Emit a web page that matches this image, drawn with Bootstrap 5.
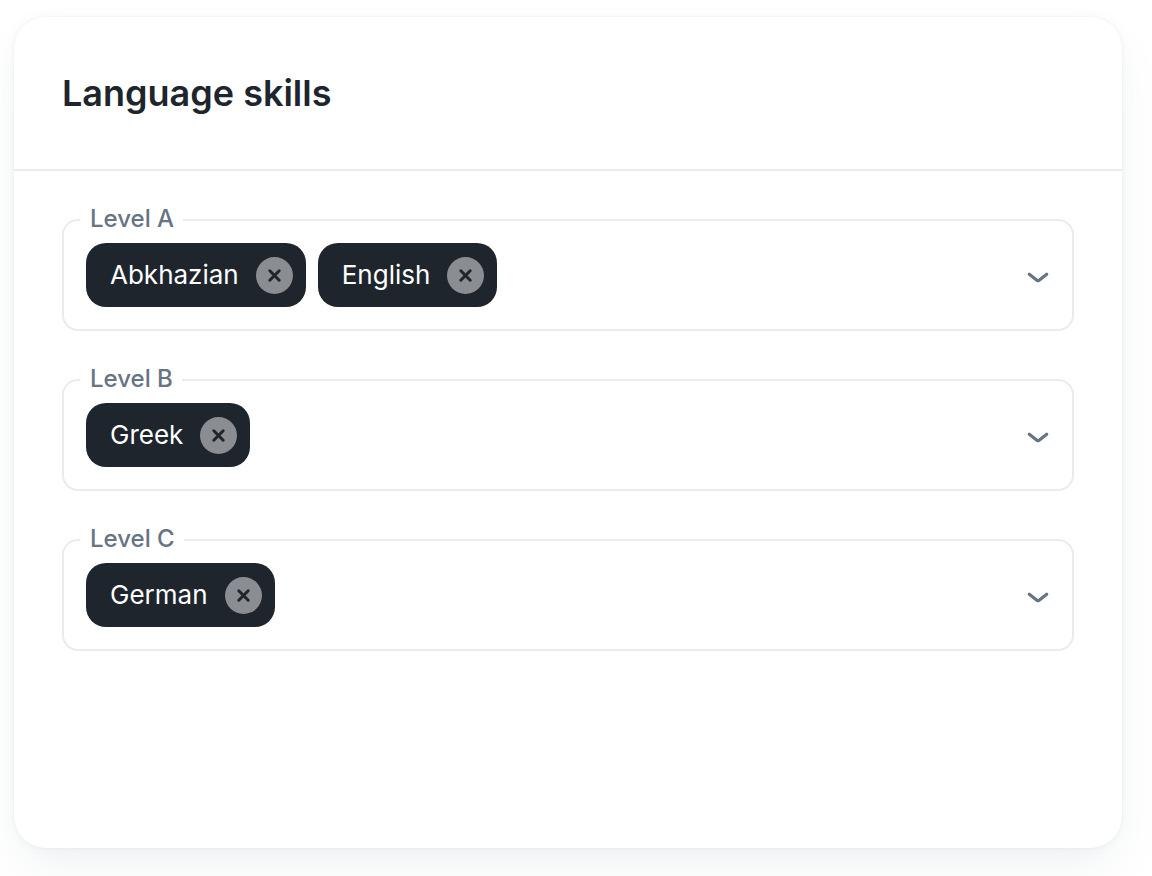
<!DOCTYPE html>
<html lang="en">
<head>
<meta charset="utf-8">
<meta name="viewport" content="width=device-width, initial-scale=1">
<title>Language skills</title>
<link href="https://cdn.jsdelivr.net/npm/bootstrap@5.3.0/dist/css/bootstrap.min.css" rel="stylesheet">
<style>
body { font-family: Inter, sans-serif; background: #fff; color: #1e252d; }
.page-wrap { padding: 17px 30px 28px 14px; }
.skills-card { border-radius: 32px; background: #fff; box-shadow: 0 0 4px rgba(80, 95, 105, .09), 0 24px 48px -8px rgba(100, 125, 140, .10), 0 0 32px rgba(0, 0, 0, .015); }
.skills-head { padding: 54px 48px; border-bottom: 2px solid #e8ecef; }
.skills-title { font-size: 36px; line-height: 44px; font-weight: 600; }
.skills-body { padding: 48px; gap: 48px; }
.level-box { border: 2px solid #e8ecef; border-radius: 16px; padding: 22px; gap: 12px; }
.level-name { top: -18px; left: 16px; padding: 0 9px 0 10px; background: #fff; color: #667483; font-size: 24px; line-height: 32px; font-weight: 500; }
.chip { height: 64px; padding: 0 13px 0 24px; gap: 17px; border-radius: 20px; background: #1e252d; color: #fff; font-size: 26px; line-height: 32px; }
.chip-x { width: 37px; height: 37px; background: #8a8d92; color: #1e252d; }
.level-input { min-width: 0; height: 64px; outline: 0; font-size: 26px; }
.level-open { width: 24px; height: 64px; color: #667483; }
</style>
</head>
<body>
<svg class="d-none" aria-hidden="true">
  <symbol id="cross" viewBox="0 0 37 37"><path d="M13.800 13.800l9.400 9.400M23.200 13.800L13.800 23.200" fill="none" stroke="currentColor" stroke-width="3" stroke-linecap="round"/></symbol>
  <symbol id="chevron" viewBox="0 0 24 16"><path d="M3.300 5.300L11.200 11.500Q12 12 12.800 11.500L20.700 5.300" fill="none" stroke="currentColor" stroke-width="3.200" stroke-linecap="round" stroke-linejoin="round"/></symbol>
</svg>
<div class="page-wrap min-vh-100 d-flex">
<main class="skills-card flex-fill">
  <header class="skills-head"><h1 class="skills-title m-0">Language skills</h1></header>
  <form class="skills-body d-flex flex-column">
    <div class="level-box position-relative d-flex">
      <label class="level-name position-absolute" for="level-a">Level A</label>
      <span class="chip d-flex align-items-center">Abkhazian
        <button type="button" class="chip-x border-0 rounded-circle p-0 d-flex" aria-label="Remove Abkhazian"><svg width="37" height="37"><use href="#cross"/></svg></button></span>
      <span class="chip d-flex align-items-center">English
        <button type="button" class="chip-x border-0 rounded-circle p-0 d-flex" aria-label="Remove English"><svg width="37" height="37"><use href="#cross"/></svg></button></span>
      <input class="level-input flex-fill border-0 p-0 bg-transparent" id="level-a" type="text" autocomplete="off">
      <button type="button" class="level-open border-0 bg-transparent p-0 d-flex align-items-center pt-1" aria-label="Open Level A list"><svg width="24" height="16"><use href="#chevron"/></svg></button>
    </div>
    <div class="level-box position-relative d-flex">
      <label class="level-name position-absolute" for="level-b">Level B</label>
      <span class="chip d-flex align-items-center">Greek
        <button type="button" class="chip-x border-0 rounded-circle p-0 d-flex" aria-label="Remove Greek"><svg width="37" height="37"><use href="#cross"/></svg></button></span>
      <input class="level-input flex-fill border-0 p-0 bg-transparent" id="level-b" type="text" autocomplete="off">
      <button type="button" class="level-open border-0 bg-transparent p-0 d-flex align-items-center pt-1" aria-label="Open Level B list"><svg width="24" height="16"><use href="#chevron"/></svg></button>
    </div>
    <div class="level-box position-relative d-flex">
      <label class="level-name position-absolute" for="level-c">Level C</label>
      <span class="chip d-flex align-items-center">German
        <button type="button" class="chip-x border-0 rounded-circle p-0 d-flex" aria-label="Remove German"><svg width="37" height="37"><use href="#cross"/></svg></button></span>
      <input class="level-input flex-fill border-0 p-0 bg-transparent" id="level-c" type="text" autocomplete="off">
      <button type="button" class="level-open border-0 bg-transparent p-0 d-flex align-items-center pt-1" aria-label="Open Level C list"><svg width="24" height="16"><use href="#chevron"/></svg></button>
    </div>
  </form>
</main>
</div>
<script src="https://cdn.jsdelivr.net/npm/bootstrap@5.3.0/dist/js/bootstrap.bundle.min.js"></script>
</body>
</html>
